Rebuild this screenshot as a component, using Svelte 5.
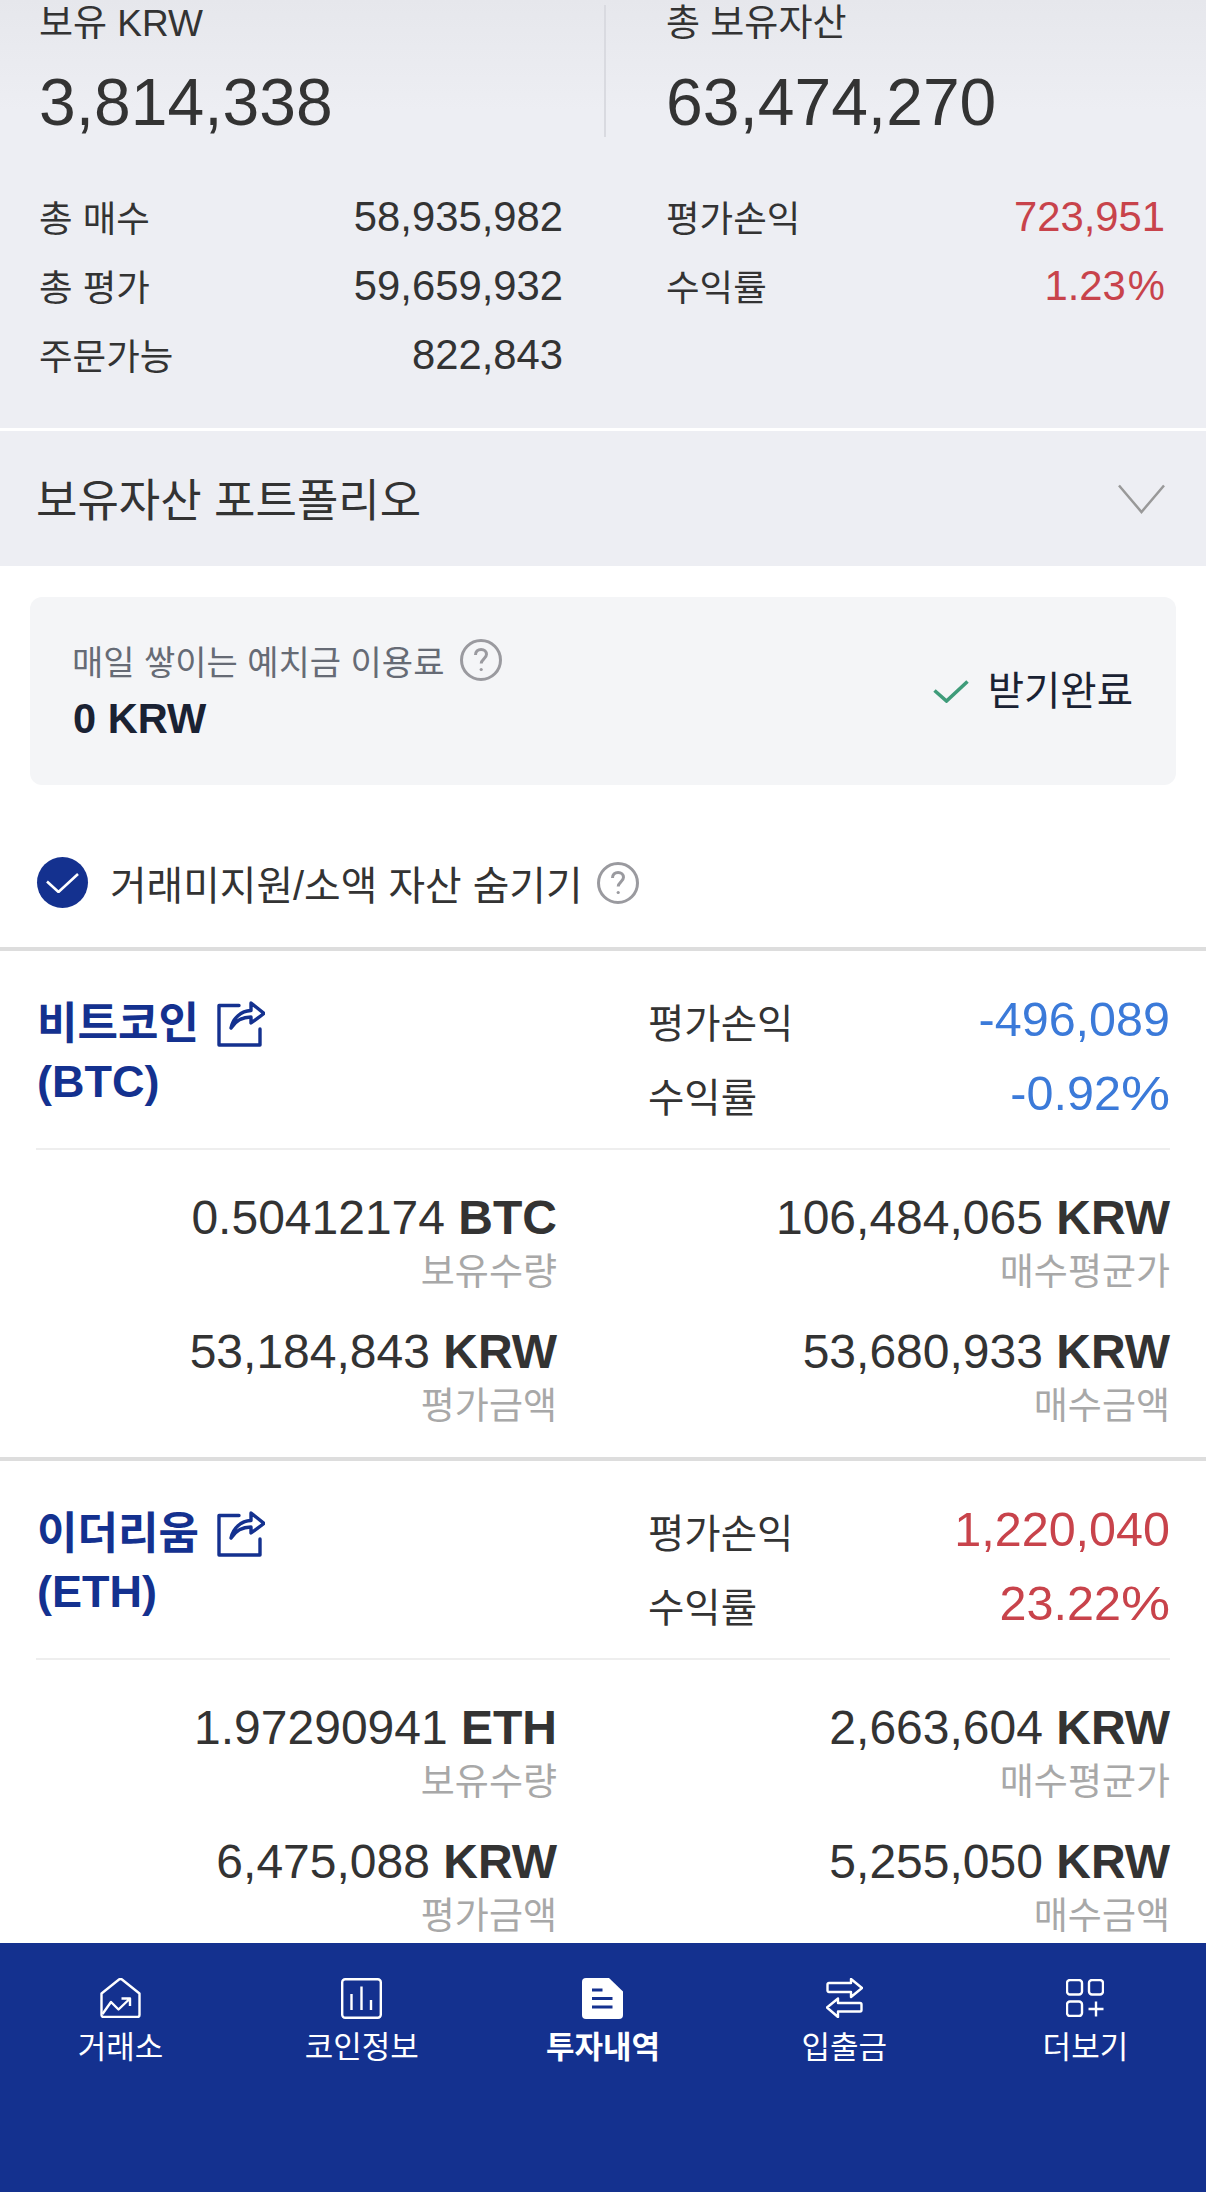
<script>
const coins = [
	{
		name: "비트코인",
		symbol: "BTC",
		profit: "-496,089",
		rate: "-0.92",
		trend: "down",
		amount: "0.50412174",
		avg: "106,484,065",
		value: "53,184,843",
		bought: "53,680,933"
	},
	{
		name: "이더리움",
		symbol: "ETH",
		profit: "1,220,040",
		rate: "23.22",
		trend: "up",
		amount: "1.97290941",
		avg: "2,663,604",
		value: "6,475,088",
		bought: "5,255,050"
	}
];

const tabs = [
	{ label: "거래소", icon: "exchange" },
	{ label: "코인정보", icon: "info" },
	{ label: "투자내역", icon: "history", active: true },
	{ label: "입출금", icon: "transfer" },
	{ label: "더보기", icon: "more" }
];
</script>

{#snippet help()}
	<svg class="help" viewBox="0 0 42 42" aria-hidden="true">
		<circle cx="21" cy="21" r="19.5" />
		<path d="M15.5 16c0-3.4 2.4-5.6 5.6-5.6s5.4 2 5.4 4.9c0 4.4-5.3 4.6-5.3 9.3" />
		<circle class="dot" cx="21.2" cy="30.5" r="1.6" />
	</svg>
{/snippet}

<div class="page">
	<main class="content">
		<section class="summary">
			<div class="totals">
				<div class="total">
					<div class="total-label">보유 KRW</div>
					<div class="total-value">3,814,338</div>
				</div>
				<div class="total second">
					<div class="total-label">총 보유자산</div>
					<div class="total-value">63,474,270</div>
				</div>
			</div>
			<div class="stats">
				<div class="stat-col">
					<div class="stat"><span>총 매수</span><span class="num">58,935,982</span></div>
					<div class="stat"><span>총 평가</span><span class="num">59,659,932</span></div>
					<div class="stat"><span>주문가능</span><span class="num">822,843</span></div>
				</div>
				<div class="stat-col">
					<div class="stat"><span>평가손익</span><span class="num up">723,951</span></div>
					<div class="stat"><span>수익률</span><span class="num up">1.23<span class="pct small">%</span></span></div>
				</div>
			</div>
		</section>

		<section class="portfolio">
			<h2>보유자산 포트폴리오</h2>
			<svg class="chevron" viewBox="0 0 47 30" aria-hidden="true">
				<path d="M1 1.5 23.5 28 46 1.5" />
			</svg>
		</section>

		<section class="fee-card">
			<div class="fee-text">
				<div class="fee-label">매일 쌓이는 예치금 이용료 {@render help()}</div>
				<div class="fee-value">0 KRW</div>
			</div>
			<div class="fee-status">
				<svg viewBox="0 0 36 23" aria-hidden="true"><path d="M1.500 10.500 13.500 21 34.500 1.500" /></svg>
				받기완료
			</div>
		</section>

		<div class="hide-row">
			<span class="check">
				<svg viewBox="0 0 33 20" aria-hidden="true"><path d="M1 8.500 12.500 19 32 1" /></svg>
			</span>
			<span>거래미지원/소액 자산 숨기기</span>
			{@render help()}
		</div>

		{#each coins as coin}
			<article class="coin">
				<div class="coin-head">
					<div class="coin-name">
						<div class="name-line">
							{coin.name}
							<svg class="share" viewBox="0 0 48 46" aria-hidden="true">
								<path d="M22 4.5H2v39.5h41V28" />
								<path d="M14 27c2-10 10-17 20-17.500V2l13 10.500L34 22v-6c-8 0-15 3-20 11Z" />
							</svg>
						</div>
						<div class="symbol">({coin.symbol})</div>
					</div>
					<div class="coin-result">
						<div class="result-row">
							<span>평가손익</span><span class="result {coin.trend}">{coin.profit}</span>
						</div>
						<div class="result-row">
							<span>수익률</span><span class="result {coin.trend}">{coin.rate}<span class="pct">%</span></span>
						</div>
					</div>
				</div>
				<div class="coin-line"></div>
				<div class="details">
					<div class="cell">
						<div class="amount">{coin.amount} <b>{coin.symbol}</b></div>
						<div class="caption">보유수량</div>
					</div>
					<div class="cell">
						<div class="amount">{coin.avg} <b>KRW</b></div>
						<div class="caption">매수평균가</div>
					</div>
					<div class="cell">
						<div class="amount">{coin.value} <b>KRW</b></div>
						<div class="caption">평가금액</div>
					</div>
					<div class="cell">
						<div class="amount">{coin.bought} <b>KRW</b></div>
						<div class="caption">매수금액</div>
					</div>
				</div>
			</article>
		{/each}
	</main>

	<nav class="tabs">
		{#each tabs as tab}
			<div class="tab" class:active={tab.active}>
				<span class="tab-icon">
					{#if tab.icon === "exchange"}
						<svg width="41" height="40" viewBox="0 0 41 40">
							<path d="M1.500 15.500 19 1.500a2.400 2.400 0 0 1 3 0l17.500 14V37a2 2 0 0 1-2 2h-34a2 2 0 0 1-2-2Z" />
							<path d="M2.500 36 11 24l7.500 7.500L30 20.500M21.500 20.500H30V28" />
						</svg>
					{:else if tab.icon === "info"}
						<svg width="41" height="41" viewBox="0 0 41 41">
							<rect x="1.200" y="1.200" width="38.600" height="38.600" rx="3" />
							<path d="M10.500 16v16M20.500 8.500V32M30 22v10" />
						</svg>
					{:else if tab.icon === "history"}
						<svg width="41" height="41" viewBox="0 0 41 41">
							<path class="solid" d="M4 0h23l14 13.500V37a4 4 0 0 1-4 4H4a4 4 0 0 1-4-4V4a4 4 0 0 1 4-4Z" />
							<path class="cut" d="M10 12h10.500M10 20.500h20.500M10 29h20.500" />
						</svg>
					{:else if tab.icon === "transfer"}
						<svg width="37" height="40" viewBox="0 0 37 40">
							<path d="M3 5h22V1l11 9-11 9v-5H3a1.500 1.500 0 0 1-1.500-1.500v-6A1.500 1.500 0 0 1 3 5Z" />
							<path d="M34 25H12v-4.500L1 29.500 12 39v-5.500h22a1.500 1.500 0 0 0 1.500-1.500v-5.500A1.500 1.500 0 0 0 34 25Z" />
						</svg>
					{:else}
						<svg width="38" height="38" viewBox="0 0 38 38">
							<rect x="1" y="1" width="15" height="14.500" rx="3" />
							<rect x="23" y="1" width="14" height="14.500" rx="3" />
							<rect x="1" y="22.500" width="15" height="14.500" rx="3" />
							<path d="M22.500 30h15M30 22.500v15" />
						</svg>
					{/if}
				</span>
				<span class="tab-label">{tab.label}</span>
			</div>
		{/each}
	</nav>
</div>

<style>
:global(body) {
	margin: 0;
	background: #fff;
}

.page {
	width: 1206px;
	height: 2192px;
	display: flex;
	flex-direction: column;
	overflow: hidden;
	font-family: "Liberation Sans", "Noto Sans CJK KR", sans-serif;
	color: #333;
}

.content {
	flex: 1;
	min-height: 0;
	overflow: hidden;
}

.summary {
	height: 428px;
	box-sizing: border-box;
	padding-top: 5px;
	background: linear-gradient(#e6e7ec, #edeef3 110px);
}

.totals {
	display: flex;
	height: 132px;
}

.total {
	width: 604px;
	box-sizing: border-box;
	padding-left: 39px;
}

.total.second {
	width: auto;
	border-left: 2px solid #d9dae0;
	padding-left: 60px;
}

.total-label {
	font-size: 37px;
	line-height: 38px;
}

.total-value {
	margin-top: 24px;
	font-size: 66px;
	line-height: 70px;
}

.stats {
	display: grid;
	grid-template-columns: 524px 499px;
	column-gap: 103px;
	margin-top: 45px;
	padding-left: 39px;
}

.stat {
	display: flex;
	justify-content: space-between;
	align-items: center;
	height: 69px;
	font-size: 36.500px;
}

.num {
	font-size: 41.800px;
}

.up {
	color: #c8434b;
}

.portfolio {
	display: flex;
	align-items: center;
	justify-content: space-between;
	height: 135px;
	box-sizing: border-box;
	margin-top: 3px;
	padding: 0 41px 0 36px;
	background: #edeef3;
}

.portfolio h2 {
	margin: 0 0 2px;
	font-size: 45px;
	font-weight: 400;
}

.chevron {
	width: 47px;
	height: 30px;
	fill: none;
	stroke: #999;
	stroke-width: 2.500;
}

.fee-card {
	display: flex;
	justify-content: space-between;
	align-items: center;
	height: 188px;
	margin: 31px 30px 0;
	padding: 0 43px 0 43px;
	border-radius: 12px;
	background: #f4f5f7;
}

.fee-text {
	align-self: flex-start;
	padding-top: 41px;
}

.fee-label {
	display: flex;
	align-items: center;
	gap: 16px;
	height: 44px;
	margin-left: -1px;
	font-size: 34px;
	color: #666b75;
}

.fee-value {
	margin-top: 14px;
	font-size: 41.600px;
	font-weight: 700;
	line-height: 46px;
	color: #1a2233;
}

.fee-status {
	display: flex;
	align-items: center;
	gap: 19px;
	font-size: 39.500px;
	line-height: 50px;
	color: #1a2233;
}

.fee-status svg {
	width: 36px;
	height: 23px;
	fill: none;
	stroke: #3f9c7a;
	stroke-width: 3.600;
}

.help {
	flex: none;
	width: 42px;
	height: 42px;
	fill: none;
	stroke: #9a9a9f;
	stroke-width: 3;
}

.help .dot {
	fill: #9a9a9f;
	stroke: none;
}

.hide-row {
	display: flex;
	align-items: center;
	height: 162px;
	box-sizing: border-box;
	padding: 33px 0 0 37px;
	font-size: 39.800px;
}

.hide-row .help {
	margin-left: 14px;
}

.check {
	display: flex;
	align-items: center;
	justify-content: center;
	width: 51px;
	height: 51px;
	margin-right: 22px;
	border-radius: 50%;
	background: #14318f;
}

.check svg {
	width: 33px;
	height: 20px;
	fill: none;
	stroke: #fff;
	stroke-width: 2.600;
}

.coin {
	border-top: 4px solid #dddddd;
}

.coin-head {
	display: flex;
	height: 197px;
	box-sizing: border-box;
	padding: 44px 36px 0 37px;
}

.coin-name {
	width: 611px;
	font-size: 44px;
	font-weight: 700;
	line-height: 58px;
	color: #14318f;
}

.name-line {
	display: flex;
	align-items: center;
	gap: 18px;
}

.symbol {
	font-size: 45px;
}

.share {
	width: 48px;
	height: 46px;
	fill: none;
	stroke: #14318f;
	stroke-width: 3.400;
	stroke-linejoin: round;
	stroke-linecap: round;
}

.coin-result {
	flex: 1;
	margin-top: -12px;
}

.result-row {
	display: flex;
	justify-content: space-between;
	align-items: center;
	height: 74px;
	font-size: 39.500px;
}

.result {
	font-size: 48.500px;
	line-height: 50px;
	padding-bottom: 2px;
}

.pct {
	display: inline-block;
	margin-left: 6px;
	transform: scaleX(1.14);
	transform-origin: right;
}

.pct.small {
	margin-left: 2px;
	transform: none;
}

.result.up {
	color: #c8434b;
}

.result.down {
	color: #3b7ad9;
}

.coin-line {
	height: 2px;
	margin: 0 36px;
	background: #eeeeee;
}

.details {
	display: grid;
	grid-template-columns: 557px 613px;
	row-gap: 26px;
	padding: 40px 0 25px;
}

.cell {
	text-align: right;
}

.amount {
	font-size: 48px;
	line-height: 56px;
}

.caption {
	margin-top: 2px;
	font-size: 37px;
	line-height: 50px;
	color: #a8a8a8;
}

.tabs {
	flex: none;
	display: grid;
	grid-template-columns: repeat(5, 1fr);
	height: 249px;
	box-sizing: border-box;
	padding-top: 35px;
	background: #14318f;
	color: #fff;
}

.tab {
	display: flex;
	flex-direction: column;
	align-items: center;
	font-size: 31px;
}

.tab.active {
	font-weight: 700;
}

.tab-icon {
	display: flex;
	align-items: center;
	height: 40px;
	margin-bottom: 10px;
}

.tab-label {
	line-height: 40px;
}

.tab-icon svg {
	fill: none;
	stroke: #fff;
	stroke-width: 2.400;
	stroke-linejoin: round;
}

.tab-icon .solid {
	fill: #fff;
	stroke: none;
}

.tab-icon .cut {
	stroke: #14318f;
	stroke-width: 2.800;
}
</style>
